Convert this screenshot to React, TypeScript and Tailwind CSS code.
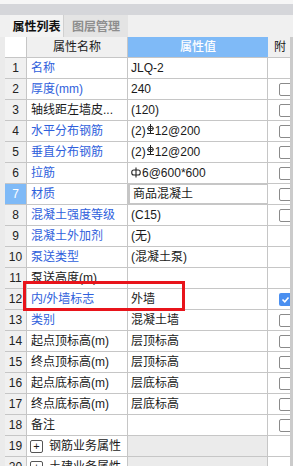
import React from "react";

type Row = {
  no: number;
  name: string;
  value?: React.ReactNode;
  blue?: boolean;
  cb?: boolean;
  checked?: boolean;
  selected?: boolean;
  group?: boolean;
};

// HRB400 steel grade glyph
const SteelIII = () => (
  <svg width="7" height="10" viewBox="0 0 7 10" className="inline-block mx-[1px] -translate-y-[2px]">
    <line x1="3.5" y1="0" x2="3.5" y2="9" stroke="#222" strokeWidth="1" />
    <ellipse cx="3.5" cy="4.5" rx="2.8" ry="2.3" fill="none" stroke="#222" strokeWidth="1" />
    <line x1="0.5" y1="4.5" x2="6.5" y2="4.5" stroke="#222" strokeWidth="0.8" />
    <line x1="0" y1="9.5" x2="7" y2="9.5" stroke="#222" strokeWidth="1" />
  </svg>
);

// HPB300 steel grade glyph
const SteelI = () => (
  <svg width="10" height="11" viewBox="0 0 10 11" className="inline-block mr-[1px] -translate-y-[1px]">
    <line x1="5" y1="0.5" x2="5" y2="10.5" stroke="#222" strokeWidth="1.1" />
    <rect x="0.8" y="3" width="8.4" height="5" rx="2" fill="none" stroke="#222" strokeWidth="1.1" />
  </svg>
);

const rows: Row[] = [
  { no: 1, name: "名称", value: "JLQ-2", blue: true },
  { no: 2, name: "厚度(mm)", value: "240", blue: true, cb: true },
  { no: 3, name: "轴线距左墙皮...", value: "(120)", cb: true },
  { no: 4, name: "水平分布钢筋", value: <>(2)<SteelIII />12@200</>, blue: true, cb: true },
  { no: 5, name: "垂直分布钢筋", value: <>(2)<SteelIII />12@200</>, blue: true, cb: true },
  { no: 6, name: "拉筋", value: <><SteelI />6@600*600</>, blue: true, cb: true },
  { no: 7, name: "材质", value: "商品混凝土", blue: true, cb: true, selected: true },
  { no: 8, name: "混凝土强度等级", value: "(C15)", blue: true, cb: true },
  { no: 9, name: "混凝土外加剂", value: "(无)", blue: true },
  { no: 10, name: "泵送类型", value: "(混凝土泵)", blue: true },
  { no: 11, name: "泵送高度(m)" },
  { no: 12, name: "内/外墙标志", value: "外墙", blue: true, cb: true, checked: true },
  { no: 13, name: "类别", value: "混凝土墙", blue: true, cb: true },
  { no: 14, name: "起点顶标高(m)", value: "层顶标高", cb: true },
  { no: 15, name: "终点顶标高(m)", value: "层顶标高", cb: true },
  { no: 16, name: "起点底标高(m)", value: "层底标高", cb: true },
  { no: 17, name: "终点底标高(m)", value: "层底标高", cb: true },
  { no: 18, name: "备注", cb: true },
  { no: 19, name: "钢筋业务属性", group: true },
  { no: 20, name: "土建业务属性", group: true },
];

const Checkbox = ({ checked }: { checked?: boolean }) =>
  checked ? (
    <div className="ml-[11px] w-[13px] h-[13px] shrink-0 rounded-[2px] bg-[#4a8ff0] flex items-center justify-center">
      <svg width="9" height="9" viewBox="0 0 9 9">
        <path d="M1.5 4.5 L3.8 6.8 L7.5 2.5" fill="none" stroke="white" strokeWidth="1.6" />
      </svg>
    </div>
  ) : (
    <div className="ml-[11px] w-[13px] h-[13px] rounded-[2px] border border-[#8a8a8a] bg-white shrink-0" />
  );

export default function App() {
  return (
    <div className="relative w-[293px] h-[466px] overflow-hidden bg-[#f0f0f0] text-[12px] text-[#1a1a1a] font-['Liberation_Sans','Noto_Sans_CJK_SC',sans-serif]">
      {/* title strip */}
      <div className="h-[4px] bg-[#f6f6f6]" />
      <div className="h-[11px] bg-[#d5d6da]" />

      {/* tabs */}
      <div className="h-[22px] flex items-stretch pl-[10px] bg-[#f0f0f0] font-['Noto_Sans_CJK_SC',sans-serif] font-bold text-[12px]">
        <div className="w-[53px] flex items-center justify-center text-[#111] bg-[#f3f3f3]">属性列表</div>
        <div className="w-[65px] flex items-center justify-center text-[#8e8e8e] bg-[#e4e4e4] border-l border-[#d0d0d0]">
          图层管理
        </div>
      </div>

      <div className="flex">
        <div className="w-[5px] bg-[#ebebeb]" />
        <div className="w-[285px] bg-white">
          {/* header */}
          <div className="flex h-[21px] border-b border-[#c6c6c6]">
            <div className="w-[22px] bg-white border-r border-[#c6c6c6]" />
            <div className="w-[101px] bg-[#f0f0f0] border-r border-[#c6c6c6] flex items-center justify-center">
              属性名称
            </div>
            <div className="w-[140px] bg-[#7fbaf7] text-white font-medium flex items-center justify-center">
              属性值
            </div>
            <div className="w-[22px] bg-[#f0f0f0] flex items-center pl-[6px] overflow-hidden whitespace-nowrap">附</div>
          </div>

          {rows.map((r) => (
            <div key={r.no} className="flex h-[21px] border-b border-[#c6c6c6]">
              <div
                className={`w-[22px] shrink-0 border-r border-[#c6c6c6] flex items-center justify-center ${
                  r.selected ? "bg-[#7fbaf7] text-white" : "bg-[#f0f0f0] text-[#222]"
                }`}
              >
                {r.no}
              </div>
              {r.group ? (
                <>
                  <div className="w-[101px] shrink-0 border-r border-[#c6c6c6] flex items-center pl-[3px] bg-white whitespace-nowrap">
                    <span className="w-[13px] h-[13px] border border-[#555] rounded-[2px] flex items-center justify-center text-[11px] leading-none mr-[6px]">
                      +
                    </span>
                    {r.name}
                  </div>
                  <div className="w-[140px] shrink-0 border-r border-[#c6c6c6] bg-[#ebebeb]" />
                  <div className="w-[22px] shrink-0 bg-white" />
                </>
              ) : (
                <>
                  <div
                    className={`w-[101px] shrink-0 border-r border-[#c6c6c6] flex items-center pl-[4px] whitespace-nowrap overflow-hidden ${
                      r.blue ? "text-[#2f5fdc]" : "text-[#1a1a1a]"
                    }`}
                  >
                    {r.name}
                  </div>
                  <div
                    className={`w-[140px] shrink-0 border-r border-[#c6c6c6] flex items-center pl-[3px] whitespace-nowrap ${
                      r.selected ? "border-2 border-[#6f6f6f] -mt-[1px] h-[22px] pl-[2px]" : ""
                    }`}
                  >
                    {r.value}
                  </div>
                  <div className="w-[22px] shrink-0 flex items-center overflow-hidden">
                    {r.cb && <Checkbox checked={r.checked} />}
                  </div>
                </>
              )}
            </div>
          ))}
        </div>
        {/* scrollbar */}
        <div className="w-[3px] bg-[#cbcbcb]" />
      </div>

      {/* highlight box */}
      <div className="absolute left-[23px] top-[281px] w-[162px] h-[30px] border-[3px] border-[#e8141b]" />
    </div>
  );
}
